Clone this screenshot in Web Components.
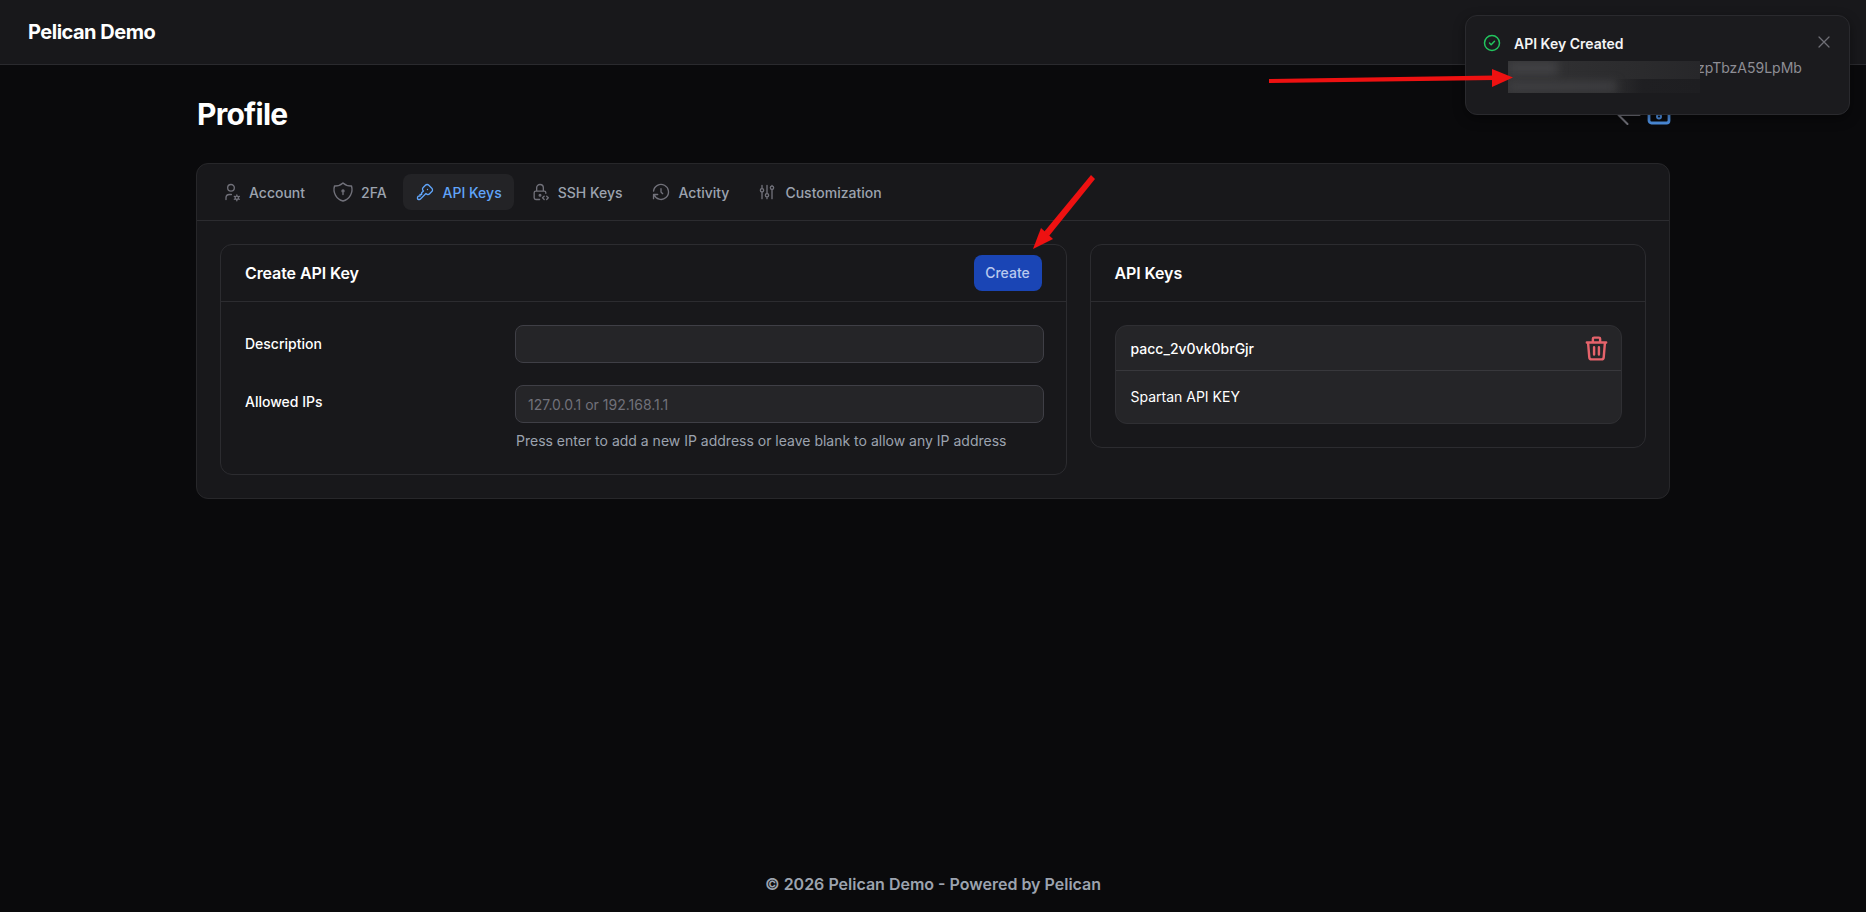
<!DOCTYPE html>
<html lang="en">
<head>
<meta charset="utf-8">
<title>Pelican Demo</title>
<style>
  html, body { margin: 0; height: 100%; }
  body {
    background: #0a0a0c;
    color: #fff;
    font-family: Inter, "Liberation Sans", sans-serif;
    font-size: 14px;
    display: flex;
    flex-direction: column;
    min-height: 912px;
    position: relative;
    overflow: hidden;
  }
</style>
</head>
<body>
  <app-header>Pelican Demo</app-header>
  <profile-page>
    <api-key-form></api-key-form>
    <api-key-list></api-key-list>
  </profile-page>
  <app-footer>© 2026 Pelican Demo - Powered by Pelican</app-footer>
  <toast-note title="API Key Created">zpTbzA59LpMb</toast-note>
  <red-arrows></red-arrows>

<script>
// tabler style icons, the paths only
const ICONS = {
  account: "M8 7a4 4 0 1 0 8 0a4 4 0 0 0 -8 0 M6 21v-2a4 4 0 0 1 4 -4h2.5 M17 19a2 2 0 1 0 4 0a2 2 0 1 0 -4 0 M19 15.5v1.5 M19 21v1.5 M22.03 17.25l-1.3 .75 M17.27 20l-1.3 .75 M15.97 17.25l1.3 .75 M20.73 20l1.3 .75",
  shield: "M12 3a12 12 0 0 0 8.5 3a12 12 0 0 1 -8.5 15a12 12 0 0 1 -8.5 -15a12 12 0 0 0 8.5 -3 M11 11a1 1 0 1 0 2 0a1 1 0 1 0 -2 0 M12 12v2.5",
  key: "M16.555 3.843l3.602 3.602a2.877 2.877 0 0 1 0 4.069l-2.643 2.643a2.877 2.877 0 0 1 -4.069 0l-.301 -.301l-6.558 6.558a2 2 0 0 1 -1.239 .578l-.175 .008h-1.172a1 1 0 0 1 -.993 -.883l-.007 -.117v-1.172a2 2 0 0 1 .467 -1.284l.119 -.13l.414 -.414h2v-2h2v-2l2.144 -2.144l-.301 -.301a2.877 2.877 0 0 1 0 -4.069l2.643 -2.643a2.877 2.877 0 0 1 4.069 0z M15 9h.01",
  lockCode: "M11.5 21h-4.5a2 2 0 0 1 -2 -2v-6a2 2 0 0 1 2 -2h10a2 2 0 0 1 2 2v.5 M11 16a1 1 0 1 0 2 0a1 1 0 0 0 -2 0 M8 11v-4a4 4 0 1 1 8 0v4 M20 21l2 -2l-2 -2 M17 17l-2 2l2 2",
  history: "M12 8v4l2 2 M3.05 11a9 9 0 1 1 .5 4m-.5 5v-5h5",
  sliders: "M4 10a2 2 0 1 0 4 0a2 2 0 0 0 -4 0 M6 4v4 M6 12v8 M10 16a2 2 0 1 0 4 0a2 2 0 0 0 -4 0 M12 4v10 M12 18v2 M16 7a2 2 0 1 0 4 0a2 2 0 0 0 -4 0 M18 4v1 M18 9v11",
  trash: "M4 7h16 M10 11v6 M14 11v6 M5 7l1 12a2 2 0 0 0 2 2h8a2 2 0 0 0 2 -2l1 -12 M9 7v-3a1 1 0 0 1 1 -1h4a1 1 0 0 1 1 1v3",
  check: "M3 12a9 9 0 1 0 18 0a9 9 0 0 0 -18 0 M9 12l2 2l4 -4",
  close: "M18 6l-12 12 M6 6l12 12",
  back: "M5 12h14 M5 12l6 6 M5 12l6 -6"
};

function icon(name, size, stroke = 2) {
  return `<svg width="${size}" height="${size}" viewBox="0 0 24 24" fill="none" stroke="currentColor" stroke-width="${stroke}" stroke-linecap="round" stroke-linejoin="round"><path d="${ICONS[name]}"/></svg>`;
}

class AppHeader extends HTMLElement {
  constructor() {
    super();
    this.attachShadow({ mode: "open" });
  }
  connectedCallback() {
    this.shadowRoot.innerHTML = `
      <style>
        :host {
          display: flex;
          align-items: center;
          box-sizing: border-box;
          height: 65px;
          padding: 0 28px;
          background: #18181b;
          border-bottom: 1px solid #2a2a2e;
          flex: none;
        }
        span { font-size: 20px; font-weight: 700; letter-spacing: -0.5px; color: #fff; }
      </style>
      <span><slot></slot></span>
    `;
  }
}

class ProfilePage extends HTMLElement {
  constructor() {
    super();
    this.attachShadow({ mode: "open" });
  }
  connectedCallback() {
    const tabs = [
      ["account", "Account"],
      ["shield", "2FA"],
      ["key", "API Keys", true],
      ["lockCode", "SSH Keys"],
      ["history", "Activity"],
      ["sliders", "Customization"]
    ];
    this.shadowRoot.innerHTML = `
      <style>
        :host { display: block; width: 1474px; margin: 0 auto; padding-top: 31px; flex: none; }
        .top { display: flex; align-items: center; justify-content: space-between; height: 36px; margin-bottom: 31px; }
        h1 { margin: 0 0 0 1px; font-size: 30px; line-height: 36px; font-weight: 700; letter-spacing: -0.75px; color: #fff; }
        .actions { display: flex; align-items: center; gap: 0; margin-right: -1px; }
        .actions .back { color: #71717a; display: flex; margin-top: 2px; }
        .actions .lock { color: #4f93e6; display: flex; margin-top: -2px; }
        .card {
          background: #18181b;
          border: 1px solid #27272a;
          border-radius: 12px;
        }
        nav {
          display: flex;
          gap: 4px;
          padding: 10px 12px;
          border-bottom: 1px solid #2c2c30;
        }
        .tab {
          display: flex;
          align-items: center;
          gap: 8px;
          height: 36px;
          padding: 0 12px;
          border-radius: 8px;
          font-size: 14px;
          font-weight: 500;
          color: #9ca3af;
        }
        .tab svg { color: #71717a; flex: none; }
        .tab svg.big { margin: 0 -2px; }
        .tab.on { background: #232326; color: #60a5fa; }
        .tab.on svg { color: #60a5fa; }
        .body {
          display: grid;
          grid-template-columns: minmax(0, 846.5fr) minmax(0, 556.5fr);
          gap: 23px;
          padding: 23px 23px 23px;
          align-items: start;
        }
      </style>
      <div class="top">
        <h1>Profile</h1>
        <div class="actions">
          <span class="back">${icon("back", 36, 1.4)}</span>
          <span class="lock">
            <svg width="24" height="24" viewBox="0 0 24 24" fill="none" stroke="currentColor" stroke-width="2.8">
              <rect x="2" y="2" width="20" height="20" rx="2.5"/>
              <circle cx="12" cy="15.5" r="2" stroke-width="2"/>
            </svg>
          </span>
        </div>
      </div>
      <div class="card">
        <nav>
          ${tabs.map(([i, label, on]) => {
            // the shield is drawn a little larger than the others in the reference
            const svg = i === "shield"
              ? icon(i, 24, 1.4).replace("<svg ", '<svg class="big" ')
              : icon(i, 20, 1.6);
            return `<div class="tab${on ? " on" : ""}">${svg}<span>${label}</span></div>`;
          }).join("")}
        </nav>
        <div class="body"><slot></slot></div>
      </div>
    `;
  }
}

class PanelCard extends HTMLElement {
  constructor() {
    super();
    this.attachShadow({ mode: "open" });
  }
  connectedCallback() {
    this.shadowRoot.innerHTML = `
      <style>
        :host {
          display: block;
          border: 1px solid #2c2c30;
          border-radius: 12px;
          background: #18181b;
        }
        header {
          display: flex;
          align-items: center;
          justify-content: space-between;
          height: 56px;
          padding: 0 24px;
          border-bottom: 1px solid #2c2c30;
        }
        h2 { margin: 0; font-size: 16px; font-weight: 600; color: #fff; letter-spacing: -0.1px; }
        .content { padding: 23px 24px 23px; }
      </style>
      <header>
        <h2>${this.getAttribute("heading")}</h2>
        <slot name="action"></slot>
      </header>
      <div class="content"><slot></slot></div>
    `;
  }
}

class ApiKeyForm extends HTMLElement {
  constructor() {
    super();
    this.attachShadow({ mode: "open" });
  }
  connectedCallback() {
    this.shadowRoot.innerHTML = `
      <style>
        :host { display: block; }
        .action {
          display: flex;
          align-items: center;
          justify-content: center;
          box-sizing: border-box;
          width: 68px;
          height: 36px;
          padding-bottom: 2px;
          background: #1a45b5;
          border-radius: 8px;
          color: #b9c9ee;
          font-size: 14px;
          font-weight: 500;
        }
        .row { display: grid; grid-template-columns: 270px minmax(0, 1fr); margin-right: -2px; }
        .row + .row { margin-top: 22px; }
        label { font-size: 14px; font-weight: 500; color: #fff; padding-top: 9px; line-height: 20px; }
        .row + .row label { padding-top: 7px; }
        .input {
          display: flex;
          align-items: center;
          box-sizing: border-box;
          height: 38px;
          padding: 0 12px;
          background: #252528;
          border: 1px solid #3f3f46;
          border-radius: 8px;
          color: #71717a;
          font-size: 14px;
        }
        .hint { margin: 8px 0 0 1px; font-size: 14px; line-height: 20px; color: #9ca3af; white-space: nowrap; }
      </style>
      <panel-card heading="Create API Key">
        <div class="action" slot="action">Create</div>
        <div class="row">
          <label>Description</label>
          <div><div class="input"></div></div>
        </div>
        <div class="row">
          <label>Allowed IPs</label>
          <div>
            <div class="input">127.0.0.1 or 192.168.1.1</div>
            <p class="hint">Press enter to add a new IP address or leave blank to allow any IP address</p>
          </div>
        </div>
      </panel-card>
    `;
  }
}

class ApiKeyList extends HTMLElement {
  constructor() {
    super();
    this.attachShadow({ mode: "open" });
  }
  connectedCallback() {
    this.shadowRoot.innerHTML = `
      <style>
        :host { display: block; }
        .item {
          margin-right: -1px;
          background: #252528;
          border: 1px solid #2f2f33;
          border-radius: 12px;
          font-size: 14px;
          color: #fff;
        }
        .id {
          display: flex;
          align-items: center;
          justify-content: space-between;
          height: 44px;
          padding: 0 10px 0 15px;
          border-bottom: 1px solid #38383c;
          font-weight: 500;
        }
        .id svg { color: #e5636b; display: block; }
        .desc { padding: 16px 15px; line-height: 20px; height: 20px; }
      </style>
      <panel-card heading="API Keys">
        <div class="item">
          <div class="id"><span>pacc_2v0vk0brGjr</span>${icon("trash", 29, 2)}</div>
          <div class="desc">Spartan API KEY</div>
        </div>
      </panel-card>
    `;
  }
}

class AppFooter extends HTMLElement {
  constructor() {
    super();
    this.attachShadow({ mode: "open" });
  }
  connectedCallback() {
    this.shadowRoot.innerHTML = `
      <style>
        :host {
          display: block;
          margin-top: auto;
          padding-bottom: 16px;
          text-align: center;
          font-size: 16px;
          line-height: 24px;
          font-weight: 600;
          color: #9ca3af;
        }
      </style>
      <slot></slot>
    `;
  }
}

class ToastNote extends HTMLElement {
  constructor() {
    super();
    this.attachShadow({ mode: "open" });
  }
  connectedCallback() {
    this.shadowRoot.innerHTML = `
      <style>
        :host {
          position: absolute;
          top: 15px;
          right: 16px;
          box-sizing: border-box;
          width: 385px;
          height: 100px;
          padding: 16px;
          display: flex;
          gap: 12px;
          background: #1b1b1e;
          border: 1px solid #2a2a2e;
          border-radius: 12px;
          box-shadow: 0 4px 12px rgba(0, 0, 0, .4);
        }
        .ok { color: #22c55e; flex: none; height: 20px; margin-top: 1px; }
        .text { flex: 1; min-width: 0; padding-top: 2px; }
        .title { font-size: 14px; line-height: 20px; font-weight: 600; color: #f4f4f5; }
        .msg {
          position: relative;
          height: 40px;
          margin-top: 4px;
          padding-left: 183px;
          font-size: 14px;
          line-height: 20px;
          color: #8e8e95;
        }
        .blur {
          position: absolute;
          left: -6px;
          top: 3px;
          width: 192px;
          height: 32px;
          overflow: hidden;
          background: linear-gradient(90deg, #323234, #2b2b2d 70%, #27272a);
        }
        .blur b {
          position: absolute;
          left: 0;
          right: 0;
          bottom: 0;
          height: 14px;
          background: linear-gradient(90deg, rgba(27,27,30,0) 55%, #1f1f22 70%, #1e1e21);
        }
        .blur i {
          position: absolute;
          display: block;
          filter: blur(5px);
          background: #414144;
        }
        .blur i:nth-child(2) { left: 0; top: 0; width: 50px; height: 14px; }
        .blur i:nth-child(3) { left: 0; top: 21px; width: 108px; height: 9px; }
        .x { color: #6f6f76; flex: none; height: 20px; margin: 0 -1px 0 0; }
      </style>
      <span class="ok">${icon("check", 20, 1.8)}</span>
      <div class="text">
        <div class="title">${this.getAttribute("title")}</div>
        <div class="msg"><div class="blur"><b></b><i></i><i></i></div><slot></slot></div>
      </div>
      <span class="x">${icon("close", 20, 1.5)}</span>
    `;
  }
}

// the two red marks somebody drew over the screenshot
class RedArrows extends HTMLElement {
  constructor() {
    super();
    this.attachShadow({ mode: "open" });
  }
  connectedCallback() {
    this.shadowRoot.innerHTML = `
      <style>
        :host { position: absolute; left: 0; top: 0; width: 1866px; height: 912px; pointer-events: none; }
        svg { display: block; }
      </style>
      <svg width="1866" height="912" viewBox="0 0 1866 912">
        <g fill="#ee1111" stroke="none">
          <polygon points="1269,79 1495,75.5 1495,80 1269,83"/>
          <polygon points="1492,69 1513,77.5 1492,87"/>
          <polygon points="1091,175 1095,179 1049,236 1044,232"/>
          <polygon points="1033,249 1041,228 1053,239"/>
        </g>
      </svg>
    `;
  }
}

customElements.define("app-header", AppHeader);
customElements.define("panel-card", PanelCard);
customElements.define("api-key-form", ApiKeyForm);
customElements.define("api-key-list", ApiKeyList);
customElements.define("profile-page", ProfilePage);
customElements.define("app-footer", AppFooter);
customElements.define("toast-note", ToastNote);
customElements.define("red-arrows", RedArrows);
</script>
</body>
</html>
